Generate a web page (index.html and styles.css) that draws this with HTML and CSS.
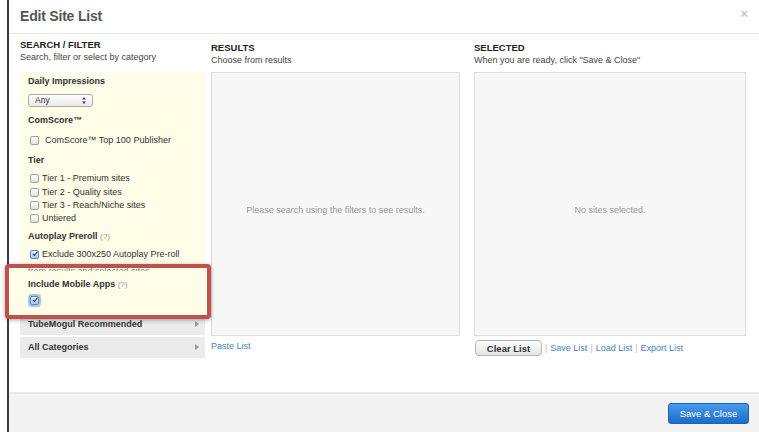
FILE: index.html
```html
<!DOCTYPE html>
<html>
<head>
<meta charset="utf-8">
<link rel="stylesheet" href="styles.css">
</head>
<body>
<div class="page">
  <div class="gutter"></div>
  <div class="modal">
    <div class="header">
      <div class="title">Edit Site List</div>
      <div class="close">×</div>
    </div>
    <div class="content">
      <div class="col col-filter">
        <div class="col-h col-h-left">SEARCH / FILTER</div>
        <div class="col-sub">Search, filter or select by category</div>
        <div class="panel">
          <div class="lbl lbl-first">Daily Impressions</div>
          <div class="select"><span>Any</span><svg class="sel-arrows" viewBox="0 0 6 9" width="6" height="9"><path d="M1 3.5 L3 1 L5 3.5 Z M1 5.5 L3 8 L5 5.5 Z" fill="#444"/></svg></div>
          <div class="lbl">ComScore™</div>
          <div class="row row-wide"><span class="cb"></span><span>ComScore™ Top 100 Publisher</span></div>
          <div class="lbl">Tier</div>
          <div class="rows">
            <div class="row"><span class="cb"></span><span>Tier 1 - Premium sites</span></div>
            <div class="row"><span class="cb"></span><span>Tier 2 - Quality sites</span></div>
            <div class="row"><span class="cb"></span><span>Tier 3 - Reach/Niche sites</span></div>
            <div class="row"><span class="cb"></span><span>Untiered</span></div>
          </div>
          <div class="lbl lbl-auto">Autoplay Preroll <span class="help">(?)</span></div>
          <div class="row row-check"><span class="cb cb-on"><svg viewBox="0 0 10 10" width="10" height="10"><path d="M2 5.2 L4.2 7.6 L8.6 1.6" fill="none" stroke="#1d2f55" stroke-width="1.7" stroke-linecap="round" stroke-linejoin="round"/></svg></span><span>Exclude 300x250 Autoplay Pre-roll</span></div>
          <div class="highlight">
            <div class="peek"><span>from results and selected sites</span></div>
            <div class="lbl lbl-mobile">Include Mobile Apps <span class="help">(?)</span></div>
            <div class="row row-mobile"><span class="cb cb-on cb-focus"><svg viewBox="0 0 10 10" width="10" height="10"><path d="M2 5.2 L4.2 7.6 L8.6 1.6" fill="none" stroke="#1d2f55" stroke-width="1.7" stroke-linecap="round" stroke-linejoin="round"/></svg></span></div>
          </div>
        </div>
        <div class="cat cat-first"><span>TubeMogul Recommended</span><span class="tri"></span></div>
        <div class="cat cat-second"><span>All Categories</span><span class="tri"></span></div>
      </div>
      <div class="col col-results">
        <div class="col-h">RESULTS</div>
        <div class="col-sub">Choose from results</div>
        <div class="box">Please search using the filters to see results.</div>
        <div class="under"><a class="link">Paste List</a></div>
      </div>
      <div class="col col-selected">
        <div class="col-h">SELECTED</div>
        <div class="col-sub">When you are ready, click "Save &amp; Close"</div>
        <div class="box">No sites selected.</div>
        <div class="under under-sel">
          <span class="btn">Clear List</span>
          <span class="sep">|</span><a class="link">Save List</a><span class="sep">|</span><a class="link">Load List</a><span class="sep">|</span><a class="link">Export List</a>
        </div>
      </div>
    </div>
    <div class="footer">
      <span class="primary">Save &amp; Close</span>
    </div>
  </div>
</div>
</body>
</html>
```

FILE: styles.css
```css
* { box-sizing: border-box; }
html, body { margin: 0; padding: 0; }
body {
  font-family: "Liberation Sans", Arial, sans-serif;
  font-size: 9px;
  color: #333;
  background: #fff;
}
.page { display: flex; width: 759px; height: 432px; overflow: hidden; }
.gutter { width: 7px; flex: none; background: #fff; }
.modal {
  flex: 1;
  border-left: 2px solid #3c3c3c;
  display: flex;
  flex-direction: column;
  background: #fff;
}
.header {
  height: 34px;
  flex: none;
  border-bottom: 1px solid #e4e4e4;
  display: flex;
  align-items: center;
  justify-content: space-between;
  padding: 0 10px 2px 11px;
}
.title { font-size: 14px; font-weight: bold; color: #555; letter-spacing: -0.2px; }
.close { font-size: 13px; font-weight: bold; color: #c8c8c8; margin-bottom: 4px; margin-right: 1px; }

.content {
  height: 358px;
  flex: none;
  display: flex;
  padding-left: 11px;
}
.col { display: flex; flex-direction: column; }
.col-filter { width: 185px; }
.col-results { width: 249px; margin-left: 6px; }
.col-selected { width: 272px; margin-left: 14px; }

.col-h { font-weight: bold; font-size: 9.5px; line-height: 13px; margin-top: 7px; color: #222; }
.col-h-left { margin-top: 4px; }
.col-sub { line-height: 13px; color: #444; }

.panel {
  margin-top: 8px;
  background: #fdfde8;
  padding: 0 0 0 8px;
  display: flex;
  flex-direction: column;
}
.lbl { font-weight: bold; line-height: 13px; margin-top: 7px; color: #333; }
.lbl-first { margin-top: 3px; }
.lbl-auto { margin-top: 5px; }
.help { font-weight: normal; color: #999; font-size: 8px; }
.select {
  margin-top: 6px;
  width: 65px;
  height: 13px;
  border: 1px solid #aaa;
  border-radius: 3px;
  background: linear-gradient(#fff, #e9e9e9);
  display: flex;
  align-items: center;
  justify-content: space-between;
  padding: 0 5px 0 6px;
  font-size: 8.5px;
  line-height: 11px;
}
.sel-arrows { display: block; }

.row { display: flex; align-items: center; height: 13.3px; line-height: 13px; gap: 3px; padding-left: 2px; }
.row-wide { margin-top: 7px; gap: 6px; }
.rows { margin-top: 5px; }
.row-check { margin-top: 4px; }
.cb {
  width: 9px;
  height: 9px;
  flex: none;
  border: 1px solid #a0a0a0;
  border-radius: 2px;
  background: linear-gradient(#fff, #e2e2e2);
  display: inline-flex;
  align-items: center;
  justify-content: center;
}
.cb-on {
  background: linear-gradient(#e4efff, #a8c6ee);
  border-color: #5f86bd;
  overflow: visible;
}
.cb-on svg { margin-left: 1px; margin-top: -1px; }
.cb-focus { box-shadow: 0 0 1px 2px rgba(94, 145, 220, 0.55); }

.highlight {
  position: relative;
  z-index: 2;
  margin: 3px -6px -6px -23px;
  height: 55px;
  border: 4px solid #c0504e;
  border-radius: 4px;
  background: #fdfde8;
  box-shadow: 0 1px 4px rgba(0,0,0,0.35);
  padding-left: 19px;
}
.peek { height: 3px; overflow: hidden; color: #888; line-height: 9px; }
.peek span { display: block; margin-top: -1px; }
.lbl-mobile { margin-top: 7px; }
.row-mobile { margin-top: 3px; height: 13px; }

.cat {
  background: #ebebeb;
  display: flex;
  align-items: center;
  justify-content: space-between;
  padding: 0 6px 0 8px;
  font-weight: bold;
  color: #333;
}
.cat-first { height: 22px; padding-top: 1px; }
.cat-second { height: 21px; margin-top: 2px; }
.tri {
  width: 0; height: 0;
  border-top: 3.5px solid transparent;
  border-bottom: 3.5px solid transparent;
  border-left: 4px solid #999;
}

.box {
  margin-top: 5px;
  height: 264px;
  border: 1px solid #dcdcdc;
  background: #f7f7f7;
  display: flex;
  align-items: center;
  justify-content: center;
  color: #999;
  font-size: 9px;
  padding-top: 12px;
}
.under { margin-top: 4px; line-height: 13px; display: flex; align-items: center; }
.under-sel { margin-top: 4px; }
.link { color: #4a80c2; text-decoration: none; }
.sep { color: #bbb; margin: 0 3px 0 3px; }
.btn {
  height: 16px;
  width: 67px;
  border: 1px solid #b5b5b5;
  border-radius: 4px;
  background: linear-gradient(#fdfdfd, #e4e4e4);
  font-weight: bold;
  font-size: 9.5px;
  color: #333;
  display: inline-flex;
  align-items: center;
  justify-content: center;
  margin-left: 1px;
}
.col-selected .sep:first-of-type { margin-left: 4px; }

.footer {
  flex: 1;
  border-top: 2px solid #e9e9e9;
  background: #f3f3f3;
  display: flex;
  justify-content: flex-end;
  align-items: flex-start;
  padding: 9px 10px 0 0;
}
.primary {
  width: 81px;
  height: 21px;
  border-radius: 3px;
  border: 1px solid #1f63b5;
  background: linear-gradient(#4a9bea, #1b6bcb);
  color: #fff;
  font-size: 9.5px;
  display: inline-flex;
  align-items: center;
  justify-content: center;
}
```
